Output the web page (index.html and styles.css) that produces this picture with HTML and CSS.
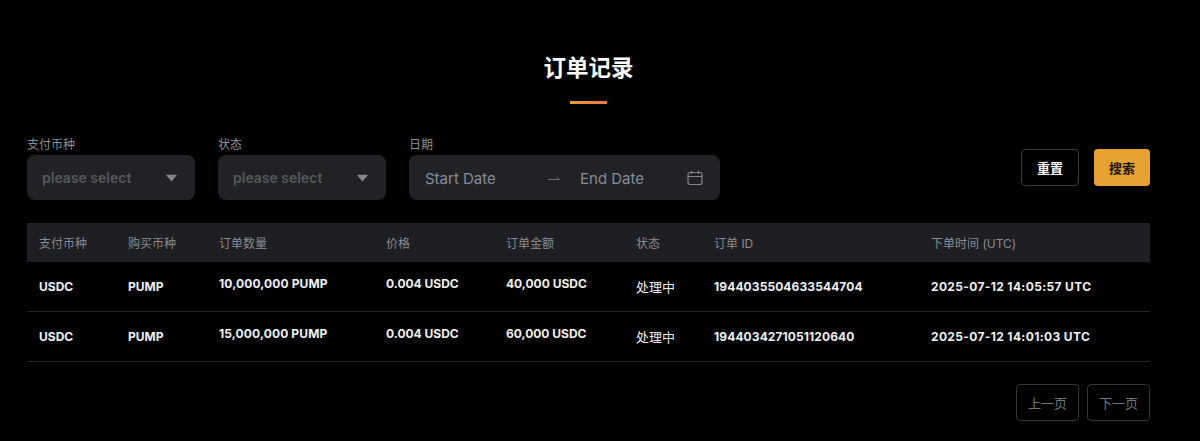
FILE: index.html
```html
<!DOCTYPE html>
<html lang="zh">
<head>
    <meta charset="UTF-8">
    <meta name="viewport" content="width=device-width, initial-scale=1.0">
    <title>订单记录</title>
    <link rel="stylesheet" href="styles.css">
</head>
<body>
    <div class="page">
        <h1 class="title">订单记录</h1>
        <div class="title-bar"></div>

        <div class="filters">
            <div class="field">
                <div class="field-label">支付币种</div>
                <div class="select">
                    <span class="select-text">please select</span>
                    <svg class="caret" width="11" height="8" viewBox="0 0 12 8"><path d="M1 .5h10a.6.6 0 0 1 .5.9L6.5 7.4a.6.6 0 0 1-1 0L.5 1.4A.6.6 0 0 1 1 .5z" fill="#85868a"/></svg>
                </div>
            </div>
            <div class="field">
                <div class="field-label">状态</div>
                <div class="select">
                    <span class="select-text">please select</span>
                    <svg class="caret" width="11" height="8" viewBox="0 0 12 8"><path d="M1 .5h10a.6.6 0 0 1 .5.9L6.5 7.4a.6.6 0 0 1-1 0L.5 1.4A.6.6 0 0 1 1 .5z" fill="#85868a"/></svg>
                </div>
            </div>
            <div class="field">
                <div class="field-label">日期</div>
                <div class="date-range">
                    <span class="date-start">Start Date</span>
                    <svg class="date-arrow" width="12" height="6" viewBox="0 0 12 6"><path d="M0 4.5h11.5L8.5 2" fill="none" stroke="#6d7079" stroke-width="1"/></svg>
                    <span class="date-end">End Date</span>
                    <svg class="calendar" width="16" height="16" viewBox="0 0 16 16" fill="none" stroke="#85868a" stroke-width="1.2"><rect x="1" y="2.5" width="14" height="12" rx="2"/><path d="M1 6.5h14M4.5 .8v3M11.5 .8v3"/></svg>
                </div>
            </div>
            <div class="filter-actions">
                <button class="btn btn-outline">重置</button>
                <button class="btn btn-primary">搜索</button>
            </div>
        </div>

        <table class="orders">
            <thead>
                <tr>
                    <th>支付币种</th>
                    <th>购买币种</th>
                    <th>订单数量</th>
                    <th>价格</th>
                    <th>订单金额</th>
                    <th>状态</th>
                    <th>订单 ID</th>
                    <th>下单时间 (UTC)</th>
                </tr>
            </thead>
            <tbody>
                <tr>
                    <td>USDC</td>
                    <td>PUMP</td>
                    <td class="raised quantity">10,000,000 PUMP</td>
                    <td class="raised">0.004 USDC</td>
                    <td class="raised">40,000 USDC</td>
                    <td class="status">处理中</td>
                    <td class="order-id">1944035504633544704</td>
                    <td class="time">2025-07-12 14:05:57 UTC</td>
                </tr>
                <tr>
                    <td>USDC</td>
                    <td>PUMP</td>
                    <td class="raised quantity">15,000,000 PUMP</td>
                    <td class="raised">0.004 USDC</td>
                    <td class="raised">60,000 USDC</td>
                    <td class="status">处理中</td>
                    <td class="order-id">1944034271051120640</td>
                    <td class="time">2025-07-12 14:01:03 UTC</td>
                </tr>
            </tbody>
        </table>

        <div class="pager">
            <button class="btn btn-page">上一页</button>
            <button class="btn btn-page">下一页</button>
        </div>
    </div>
</body>
</html>
```

FILE: styles.css
```css
* {
    box-sizing: border-box;
}

body {
    margin: 0;
    height: 441px;
    overflow: hidden;
    background-color: #000000;
    color: #ffffff;
    font-family: "Inter", "Noto Sans CJK SC", sans-serif;
}

.page {
    padding: 52px 50px 0 27px;
}

.title {
    margin: 0;
    font-size: 22.5px;
    line-height: 32px;
    font-weight: 700;
    text-align: center;
}

.title-bar {
    width: 37px;
    height: 3px;
    margin: 17px auto 0;
    background: linear-gradient(90deg, #ea9a30, #f4764a);
}

.filters {
    display: flex;
    align-items: flex-end;
    margin-top: 32px;
}

.field {
    margin-right: 23px;
}

.field-label {
    margin-bottom: 2px;
    font-size: 12px;
    line-height: 17px;
    color: #8f9094;
}

.select {
    display: flex;
    align-items: center;
    justify-content: space-between;
    width: 168px;
    height: 45px;
    padding: 0 18px 0 15px;
    border-radius: 8px;
    background-color: #212226;
}

.select-text {
    font-size: 14px;
    font-weight: 600;
    color: #55575c;
}

.date-range {
    display: flex;
    align-items: center;
    width: 311px;
    height: 45px;
    padding: 1px 17px 0 16px;
    border-radius: 8px;
    background-color: #212226;
    font-size: 15px;
    color: #858b9a;
}

.date-start {
    width: 123px;
}

.date-arrow {
    margin-right: 20px;
}

.date-end {
    flex: 1;
}

.filter-actions {
    display: flex;
    gap: 15px;
    margin-left: auto;
    margin-bottom: 14px;
}

.btn {
    height: 37px;
    border-radius: 4px;
    font-family: inherit;
    font-size: 13px;
    font-weight: 700;
    padding: 0;
}

.btn-outline {
    width: 58px;
    border: 1px solid #3a3b3f;
    background-color: #000000;
    color: #ffffff;
}

.btn-primary {
    width: 56px;
    border: none;
    background-color: #e6a233;
    color: #1a1408;
}

.orders {
    width: 1123px;
    margin-top: 23px;
    border-collapse: collapse;
    table-layout: fixed;
}

.orders th {
    height: 39px;
    padding: 0 12px 1px;
    background-color: #1e1f24;
    font-size: 12px;
    font-weight: 400;
    text-align: left;
    color: #8a8b8f;
}

.orders th:nth-child(1) { width: 89px; }
.orders th:nth-child(2) { width: 91px; }
.orders th:nth-child(3) { width: 167px; }
.orders th:nth-child(4) { width: 120px; }
.orders th:nth-child(5) { width: 130px; }
.orders th:nth-child(6) { width: 78px; }
.orders th:nth-child(7) { width: 217px; }
.orders th:nth-child(8) { width: 231px; }

.orders td {
    height: 49.5px;
    padding: 0 12px;
    border-bottom: 1px solid #232428;
    font-size: 12px;
    font-weight: 700;
    color: #f1f1f1;
}

.orders td.raised {
    padding-bottom: 6px;
}

.orders td.quantity {
    letter-spacing: 0.13px;
}

.orders td.status {
    font-size: 13px;
    font-weight: 400;
}

.orders td.order-id {
    letter-spacing: 0.1px;
}

.orders td.time {
    letter-spacing: 0.35px;
}

.pager {
    display: flex;
    justify-content: flex-end;
    gap: 8px;
    margin-top: 22px;
}

.btn-page {
    width: 63px;
    border: 1px solid #35363a;
    background-color: #000000;
    color: #737477;
    font-weight: 400;
}
```
